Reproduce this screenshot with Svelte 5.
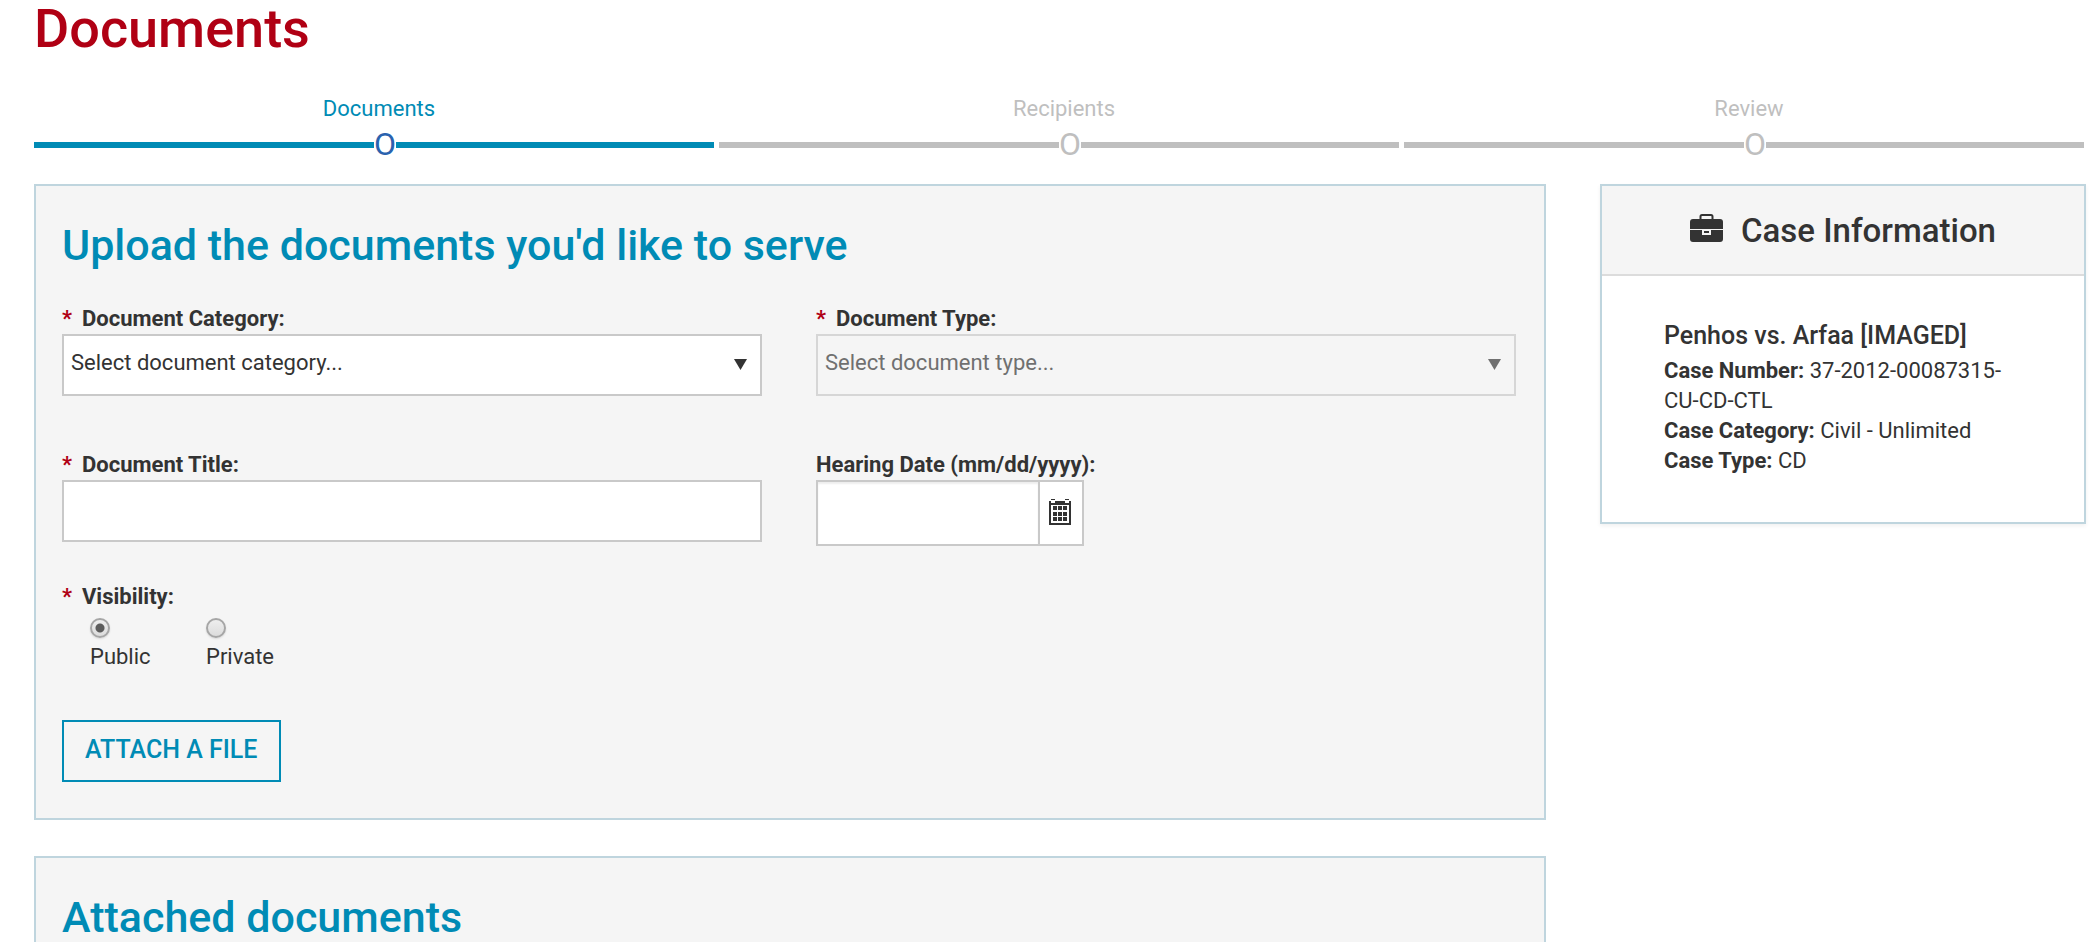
<script>
  const steps = [
    { name: 'Documents', active: true },
    { name: 'Recipients', active: false },
    { name: 'Review', active: false }
  ];

  const caseDetails = [
    { label: 'Case Number:', value: '37-2012-00087315-CU-CD-CTL' },
    { label: 'Case Category:', value: 'Civil - Unlimited' },
    { label: 'Case Type:', value: 'CD' }
  ];

  const dotColumns = [4, 9, 14];
  const dotRows = [7, 13, 18];

  let title = $state('');
  let hearingDate = $state('');
  let visibility = $state('public');
</script>

<div class="page">
  <h1>Documents</h1>

  <ol class="steps">
    {#each steps as step}
      <li class="step" class:active={step.active}>
        <span class="step-name">{step.name}</span>
        <span class="bar"><span class="marker">O</span></span>
      </li>
    {/each}
  </ol>

  <div class="columns">
    <main>
      <section class="panel">
        <h2>Upload the documents you'd like to serve</h2>
        <form onsubmit={(e) => e.preventDefault()}>
          <div class="fields">
            <div class="field">
              <label for="category"><span class="star">*</span>Document Category:</label>
              <div class="select">
                <select id="category"><option>Select document category...</option></select>
                <svg width="13" height="11" viewBox="0 0 13 11" aria-hidden="true"><path d="M0 0h13L6.500 11z" /></svg>
              </div>
            </div>
            <div class="field">
              <label for="type"><span class="star">*</span>Document Type:</label>
              <div class="select disabled">
                <select id="type" disabled><option>Select document type...</option></select>
                <svg width="13" height="11" viewBox="0 0 13 11" aria-hidden="true"><path d="M0 0h13L6.500 11z" /></svg>
              </div>
            </div>
            <div class="field">
              <label for="title"><span class="star">*</span>Document Title:</label>
              <input id="title" class="text" type="text" bind:value={title} />
            </div>
            <div class="field">
              <label for="hearing">Hearing Date (mm/dd/yyyy):</label>
              <div class="date">
                <input id="hearing" type="text" bind:value={hearingDate} />
                <button type="button" aria-label="Open calendar">
                  <svg width="22" height="26" viewBox="0 0 22 26" aria-hidden="true">
                    <path fill="#333" d="M0 2h2v2h4V2h10v2h4V2h2v24H0z" />
                    <path fill="#333" d="M2 0h4v1H2zM16 0h4v1h-4z" />
                    <path fill="#fff" d="M2 6h18v18H2z" />
                    {#each dotRows as y}
                      {#each dotColumns as x}
                        <rect {x} {y} width="4" height="4" fill="#333" />
                      {/each}
                    {/each}
                  </svg>
                </button>
              </div>
            </div>
          </div>

          <fieldset>
            <legend><span class="star">*</span>Visibility:</legend>
            <div class="radios">
              <label>
                <input type="radio" name="visibility" value="public" bind:group={visibility} />
                Public
              </label>
              <label>
                <input type="radio" name="visibility" value="private" bind:group={visibility} />
                Private
              </label>
            </div>
          </fieldset>

          <button type="button" class="attach">ATTACH A FILE</button>
        </form>
      </section>

      <section class="panel">
        <h2>Attached documents</h2>
      </section>
    </main>

    <aside class="case">
      <header>
        <svg width="33" height="28" viewBox="0 0 33 28" aria-hidden="true">
          <path fill="none" stroke="#333" stroke-width="2" d="M10.500 6V2.500a1.500 1.500 0 0 1 1.500-1.500h9a1.500 1.500 0 0 1 1.500 1.500V6" />
          <path fill="#333" d="M3 5h27a3 3 0 0 1 3 3v7H0V8a3 3 0 0 1 3-3z" />
          <path fill="#333" d="M0 16h33v9a3 3 0 0 1-3 3H3a3 3 0 0 1-3-3z" />
          <path fill="#f5f5f5" d="M12 15h9v6h-9z" />
          <path fill="#333" d="M14 17h5v2h-5z" />
        </svg>
        <h3>Case Information</h3>
      </header>
      <div class="case-body">
        <h4>Penhos vs. Arfaa [IMAGED]</h4>
        {#each caseDetails as detail}
          <p><strong>{detail.label}</strong> {detail.value}</p>
        {/each}
      </div>
    </aside>
  </div>
</div>

<style>
  .page,
  .page * {
    box-sizing: border-box;
  }

  .page {
    height: 100vh;
    overflow: hidden;
    padding: 0 10px 0 34px;
    background: #fff;
    color: #333;
    font: 400 22px/30px Roboto, sans-serif;
  }

  h1,
  h2,
  h3,
  h4,
  p {
    margin: 0;
    font-weight: 500;
  }

  h1 {
    color: #b00014;
    font-size: 54px;
    line-height: 58px;
  }

  .steps {
    display: grid;
    grid-template-columns: repeat(3, 1fr);
    gap: 5px;
    margin: 36px 2px 36px 0;
    padding: 0;
    list-style: none;
    color: #bfbfbf;
  }

  .step {
    display: flex;
    flex-direction: column;
    gap: 18px;
  }

  .step-name {
    padding-left: 10px;
    text-align: center;
  }

  .bar {
    display: flex;
    align-items: center;
    height: 6px;
    padding-left: 50%;
    background: #bfbfbf;
  }

  .marker {
    padding-bottom: 2px;
    background: #fff;
    font-size: 32px;
  }

  .active .step-name {
    color: #008bb5;
  }

  .active .bar {
    background: #008bb5;
  }

  .active .marker {
    color: #2a62ae;
  }

  .columns {
    display: grid;
    grid-template-columns: 1512fr 486fr;
    align-items: start;
    gap: 54px;
  }

  .panel {
    margin-bottom: 36px;
    padding: 28px 28px 36px 26px;
    border: 2px solid #bfd5de;
    background: #f5f5f5;
  }

  h2 {
    margin-bottom: 28px;
    color: #008bb5;
    font-size: 43px;
    line-height: 62px;
  }

  .fields {
    display: grid;
    grid-template-columns: 1fr 1fr;
    align-items: start;
    gap: 54px;
  }

  .field label,
  legend {
    display: block;
    padding: 0;
    font-weight: 700;
  }

  .star {
    display: inline-block;
    width: 20px;
    color: #b00014;
  }

  .text,
  select {
    display: block;
    width: 100%;
    height: 62px;
    margin: 0;
    padding: 0 7px 4px;
    border: 2px solid #c9c9c9;
    border-radius: 0;
    background: #fff;
    color: #333;
    font: inherit;
    appearance: none;
  }

  .select {
    display: grid;
    align-items: center;
  }

  .select > * {
    grid-area: 1 / 1;
  }

  .select svg {
    justify-self: end;
    margin: 0 15px 2px 0;
    fill: #333;
    pointer-events: none;
  }

  .disabled select {
    border-color: #d6d6d6;
    background: #f5f5f5;
    color: #707070;
    opacity: 1;
  }

  .disabled svg {
    fill: #707070;
  }

  .date {
    display: flex;
    width: 268px;
    height: 66px;
    border: 2px solid #c9c9c9;
    background: #fff;
  }

  .date input {
    flex: 1;
    min-width: 0;
    padding: 0 7px;
    border: 0;
    background: none;
    box-shadow: inset 0 2px 2px rgba(0, 0, 0, 0.07);
    font: inherit;
  }

  .date button {
    display: grid;
    place-items: center;
    width: 44px;
    padding: 0 2px 2px 0;
    border: 0;
    border-left: 2px solid #c9c9c9;
    background: none;
  }

  fieldset {
    margin: 36px 0 48px;
    padding: 0;
    border: 0;
  }

  .radios {
    display: grid;
    grid-template-columns: 116px 116px;
    padding: 6px 0 0 28px;
  }

  .radios label {
    display: flex;
    flex-direction: column;
    gap: 4px;
  }

  .radios input {
    width: 20px;
    height: 20px;
    margin: 0;
    border: 2px solid #a6a6a6;
    border-radius: 50%;
    background: linear-gradient(#eee, #dcdcdc);
    box-shadow: 0 1px 2px rgba(0, 0, 0, 0.12);
    appearance: none;
  }

  .radios input:checked {
    background: radial-gradient(circle, #5c5c5c 4px, transparent 5px), linear-gradient(#eee, #dcdcdc);
  }

  .attach {
    display: block;
    height: 62px;
    padding: 0 21px 2px;
    border: 2px solid #008bb5;
    background: none;
    color: #008bb5;
    font: 500 25px/56px Roboto, sans-serif;
  }

  .case {
    border: 2px solid #bfd5de;
    background: #fff;
    box-shadow: 0 2px 4px rgba(0, 0, 0, 0.06);
  }

  .case header {
    display: flex;
    justify-content: center;
    gap: 18px;
    height: 90px;
    padding-top: 26px;
    border-bottom: 2px solid #dcdcdc;
    background: #f5f5f5;
  }

  .case header svg {
    margin-top: 2px;
  }

  h3 {
    font-size: 33px;
    line-height: 38px;
  }

  .case-body {
    padding: 40px 62px 46px;
  }

  h4 {
    font-size: 25px;
    line-height: 40px;
  }

  p {
    font-weight: 400;
  }

  strong {
    font-weight: 700;
  }
</style>
